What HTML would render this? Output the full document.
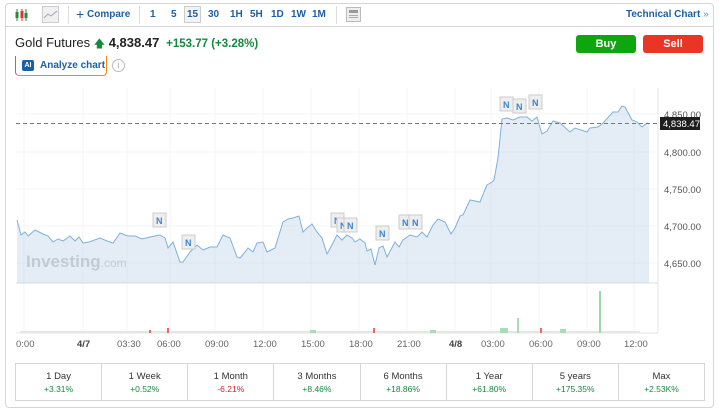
<!DOCTYPE html>
<html><head><meta charset="utf-8"><style>
*{margin:0;padding:0;box-sizing:border-box}
body{width:720px;height:412px;background:#fff;font-family:"Liberation Sans",Arial,sans-serif;position:relative;overflow:hidden}
.box{position:absolute;left:5px;top:3px;width:709px;height:405px;border:1px solid #d6d6d6;border-radius:4px}
.tb{position:absolute;left:5px;top:3px;width:709px;height:24px;border-bottom:1px solid #d6d6d6;font-size:10px;font-weight:bold;color:#1a5fa8}
.tb span{position:absolute;top:6px}
.title{position:absolute;left:15px;top:35px;font-size:13px;color:#222}
.btn{position:absolute;top:35px;width:60px;height:18px;border-radius:3px;color:#fff;font-size:11px;font-weight:bold;text-align:center;line-height:18px}
.per{position:absolute;left:15px;top:363px;width:690px;height:38px;border:1px solid #d6d6d6;display:flex}
.per div{flex:1;border-right:1px solid #d6d6d6;text-align:center;font-size:9.5px;color:#333;padding-top:7px;line-height:12px}
.per div:last-child{border-right:none}
.per b{display:block;font-weight:normal;font-size:8.5px;color:#128a3f}
</style></head><body>
<div class="box"></div>
<div class="tb">
 <svg style="position:absolute;left:10px;top:5px" width="14" height="14"><g stroke="#2a8a3a" stroke-width="1"><line x1="2" y1="1" x2="2" y2="13"/><line x1="11" y1="1" x2="11" y2="13"/></g><rect x="0.5" y="4" width="3" height="6" fill="#2a8a3a"/><line x1="7" y1="1" x2="7" y2="13" stroke="#d33"/><rect x="5.5" y="3" width="3" height="7" fill="#d33"/><rect x="9.5" y="5" width="3" height="5" fill="#2a8a3a"/></svg>
 <div style="position:absolute;left:37px;top:3px;width:17px;height:17px;border:1px solid #ccc;background:#f0f0f0"><svg width="15" height="15"><polyline points="1,11 5,7 8,9 14,4" fill="none" stroke="#9ab" stroke-width="1"/></svg></div>
 <div style="position:absolute;left:63px;top:3px;width:1px;height:18px;background:#ddd"></div>
 <span style="left:71px;top:3px;font-size:14px;font-weight:normal">+</span><span style="left:82px">Compare</span>
 <div style="position:absolute;left:134px;top:3px;width:1px;height:18px;background:#ddd"></div>
 <span style="left:145px">1</span><span style="left:166px">5</span>
 <div style="position:absolute;left:179px;top:3px;width:17px;height:17px;border:1px solid #ccc;background:#f3f3f3"></div><span style="left:182px">15</span>
 <span style="left:203px">30</span><span style="left:225px">1H</span><span style="left:245px">5H</span><span style="left:266px">1D</span><span style="left:286px">1W</span><span style="left:307px">1M</span>
 <div style="position:absolute;left:331px;top:3px;width:1px;height:18px;background:#ddd"></div>
 <div style="position:absolute;left:341px;top:4px;width:15px;height:15px;border:1px solid #bbb;background:#eee"><div style="margin:2px;height:3px;background:#999"></div><div style="margin:1px 2px;height:1px;background:#aaa"></div><div style="margin:1px 2px;height:1px;background:#aaa"></div></div>
 <span style="left:621px">Technical Chart <span style="position:static;font-weight:normal;color:#5b8fc8">»</span></span>
</div>
<div class="title">Gold Futures <span style="color:#128a3f;font-size:11px">&#129093;</span> <b>4,838.47</b> <b style="color:#128a3f;font-size:11.5px">&nbsp;+153.77 (+3.28%)</b></div>
<div class="btn" style="left:576px;background:#0ea60e">Buy</div>
<div class="btn" style="left:643px;background:#ea3526">Sell</div>
<div style="position:absolute;left:15px;top:56px;width:92px;height:20px;border:1px solid #f08a1c;border-left-color:#9a5ad0;border-top:none;border-radius:0 0 4px 4px"></div>
<div style="position:absolute;left:22px;top:60px;width:12px;height:11px;background:#1a5fa8;border-radius:2px;color:#fff;font-size:7px;font-weight:bold;text-align:center;line-height:11px">AI</div>
<div style="position:absolute;left:40px;top:60px;font-size:10px;font-weight:bold;color:#1a5fa8">Analyze chart</div>
<div style="position:absolute;left:112px;top:59px;width:13px;height:13px;border:1px solid #bbb;border-radius:50%;font-size:9px;color:#aaa;text-align:center;line-height:11px">i</div>
<svg style="position:absolute;left:0;top:0" width="720" height="412">
 <g stroke="#f5f5f5" stroke-width="1">
  <line x1="24" y1="88" x2="24" y2="333"/><line x1="83" y1="88" x2="83" y2="333"/><line x1="127" y1="88" x2="127" y2="333"/><line x1="170" y1="88" x2="170" y2="333"/><line x1="215" y1="88" x2="215" y2="333"/><line x1="263" y1="88" x2="263" y2="333"/><line x1="311" y1="88" x2="311" y2="333"/><line x1="359" y1="88" x2="359" y2="333"/><line x1="407" y1="88" x2="407" y2="333"/><line x1="455" y1="88" x2="455" y2="333"/><line x1="491" y1="88" x2="491" y2="333"/><line x1="539" y1="88" x2="539" y2="333"/><line x1="587" y1="88" x2="587" y2="333"/><line x1="634" y1="88" x2="634" y2="333"/>
  <line x1="16" y1="114" x2="658" y2="114"/><line x1="16" y1="152" x2="658" y2="152"/><line x1="16" y1="189" x2="658" y2="189"/><line x1="16" y1="226" x2="658" y2="226"/><line x1="16" y1="263" x2="658" y2="263"/>
 </g>
 <line x1="658" y1="88" x2="658" y2="333" stroke="#e6e6e6"/>
 <line x1="16" y1="283" x2="658" y2="283" stroke="#ddd"/>
 <line x1="16" y1="333" x2="658" y2="333" stroke="#e6e6e6"/>
 <text x="26" y="267" font-size="17" font-weight="bold" fill="#c4c4c4" font-family="Liberation Sans">Investing<tspan font-weight="normal" font-size="12">.com</tspan></text>
 <polygon fill="rgba(190,212,232,0.42)" points="17,283 17,220 21,235 25,232 28,236 35,230 43,234 48,236 53,242 58,239 63,241 70,236 75,241 79,237 83,243 89,242 100,238 107,241 113,243 120,233 128,236 135,236 142,239 150,237 160,235 165,238 168,248 173,242 180,262 183,262 190,252 197,245 203,250 210,247 217,247 223,235 230,238 237,257 240,258 245,252 248,248 253,252 257,243 263,242 267,252 275,248 283,222 288,219 293,218 299,216 303,232 307,228 312,224 317,232 322,238 327,254 332,245 337,235 342,240 347,235 352,238 355,242 360,239 365,243 367,251 371,249 375,265 379,248 383,246 387,257 395,242 399,247 403,240 410,235 417,237 422,232 427,237 433,225 438,219 445,222 451,234 455,228 460,216 463,215 470,200 480,202 484,192 487,185 492,182 494,180 498,158 502,119 507,118 513,120 520,117 527,117 532,121 537,117 542,134 547,131 553,121 560,123 570,132 575,128 587,132 590,128 598,127 603,123 613,112 618,112 622,106 625,107 632,120 637,122 642,127 647,123 649,124 649,283"/>
 <polyline fill="none" stroke="#7fb1dc" stroke-width="1" points="17,220 21,235 25,232 28,236 35,230 43,234 48,236 53,242 58,239 63,241 70,236 75,241 79,237 83,243 89,242 100,238 107,241 113,243 120,233 128,236 135,236 142,239 150,237 160,235 165,238 168,248 173,242 180,262 183,262 190,252 197,245 203,250 210,247 217,247 223,235 230,238 237,257 240,258 245,252 248,248 253,252 257,243 263,242 267,252 275,248 283,222 288,219 293,218 299,216 303,232 307,228 312,224 317,232 322,238 327,254 332,245 337,235 342,240 347,235 352,238 355,242 360,239 365,243 367,251 371,249 375,265 379,248 383,246 387,257 395,242 399,247 403,240 410,235 417,237 422,232 427,237 433,225 438,219 445,222 451,234 455,228 460,216 463,215 470,200 480,202 484,192 487,185 492,182 494,180 498,158 502,119 507,118 513,120 520,117 527,117 532,121 537,117 542,134 547,131 553,121 560,123 570,132 575,128 587,132 590,128 598,127 603,123 613,112 618,112 622,106 625,107 632,120 637,122 642,127 647,123 649,124"/>
 <line x1="16" y1="123.5" x2="658" y2="123.5" stroke="#777" stroke-dasharray="4,3"/>
 <g font-size="9.5" fill="#555" font-family="Liberation Sans">
  <text x="664" y="118">4,850.00</text><text x="664" y="156">4,800.00</text><text x="664" y="193">4,750.00</text><text x="664" y="230">4,700.00</text><text x="664" y="267">4,650.00</text>
 </g>
 <rect x="660" y="117" width="40" height="13" fill="#1e1e1e"/><text x="663" y="127" font-size="9.5" fill="#fff" font-family="Liberation Sans">4,838.47</text>
 <g font-size="9" font-weight="bold" fill="#3a86d0" font-family="Liberation Sans">
  <g><rect x="153" y="213" width="13" height="14" fill="#eee" stroke="#ccc"/><text x="156" y="224">N</text></g>
  <g><rect x="182" y="235" width="13" height="14" fill="#eee" stroke="#ccc"/><text x="185" y="246">N</text></g>
  <g><rect x="331" y="213" width="13" height="14" fill="#eee" stroke="#ccc"/><text x="334" y="224">N</text></g>
  <g><rect x="337" y="218" width="13" height="14" fill="#eee" stroke="#ccc"/><text x="340" y="229">N</text></g>
  <g><rect x="344" y="218" width="13" height="14" fill="#eee" stroke="#ccc"/><text x="347" y="229">N</text></g>
  <g><rect x="376" y="226" width="13" height="14" fill="#eee" stroke="#ccc"/><text x="379" y="237">N</text></g>
  <g><rect x="399" y="215" width="13" height="14" fill="#eee" stroke="#ccc"/><text x="402" y="226">N</text></g>
  <g><rect x="409" y="215" width="13" height="14" fill="#eee" stroke="#ccc"/><text x="412" y="226">N</text></g>
  <g><rect x="500" y="97" width="13" height="14" fill="#eee" stroke="#ccc"/><text x="503" y="108">N</text></g>
  <g><rect x="513" y="99" width="13" height="14" fill="#eee" stroke="#ccc"/><text x="516" y="110">N</text></g>
  <g><rect x="529" y="95" width="13" height="14" fill="#eee" stroke="#ccc"/><text x="532" y="106">N</text></g>
 </g>
 <g fill="#a8ddb5">
  <rect x="20" y="331" width="620" height="2" fill="#eee3e3"/>
  <rect x="20" y="331" width="620" height="2" fill="#d8eedd" opacity="0.5"/>
  <rect x="599" y="291" width="2" height="42" fill="#9ad9a8"/>
  <rect x="517" y="318" width="2" height="15"/>
  <rect x="500" y="328" width="8" height="5"/><rect x="560" y="329" width="6" height="4"/><rect x="430" y="330" width="6" height="3"/>
  <rect x="167" y="328" width="2" height="5" fill="#e66"/><rect x="373" y="328" width="2" height="5" fill="#e66"/><rect x="540" y="328" width="2" height="5" fill="#e66"/><rect x="149" y="330" width="2" height="3" fill="#e66"/><rect x="310" y="330" width="6" height="3"/>
 </g>
 <g font-size="9.5" fill="#666" font-family="Liberation Sans">
  <text x="16" y="347">0:00</text><text x="77" y="347" font-weight="bold" fill="#444">4/7</text><text x="117" y="347">03:30</text><text x="157" y="347">06:00</text><text x="205" y="347">09:00</text><text x="253" y="347">12:00</text><text x="301" y="347">15:00</text><text x="349" y="347">18:00</text><text x="397" y="347">21:00</text><text x="449" y="347" font-weight="bold" fill="#444">4/8</text><text x="481" y="347">03:00</text><text x="529" y="347">06:00</text><text x="577" y="347">09:00</text><text x="624" y="347">12:00</text>
 </g>
</svg>
<div class="per">
 <div>1 Day<b>+3.31%</b></div><div>1 Week<b>+0.52%</b></div><div>1 Month<b style="color:#d91e1e">-6.21%</b></div><div>3 Months<b>+8.46%</b></div><div>6 Months<b>+18.86%</b></div><div>1 Year<b>+61.80%</b></div><div>5 years<b>+175.35%</b></div><div>Max<b>+2.53K%</b></div>
</div>
</body></html>
